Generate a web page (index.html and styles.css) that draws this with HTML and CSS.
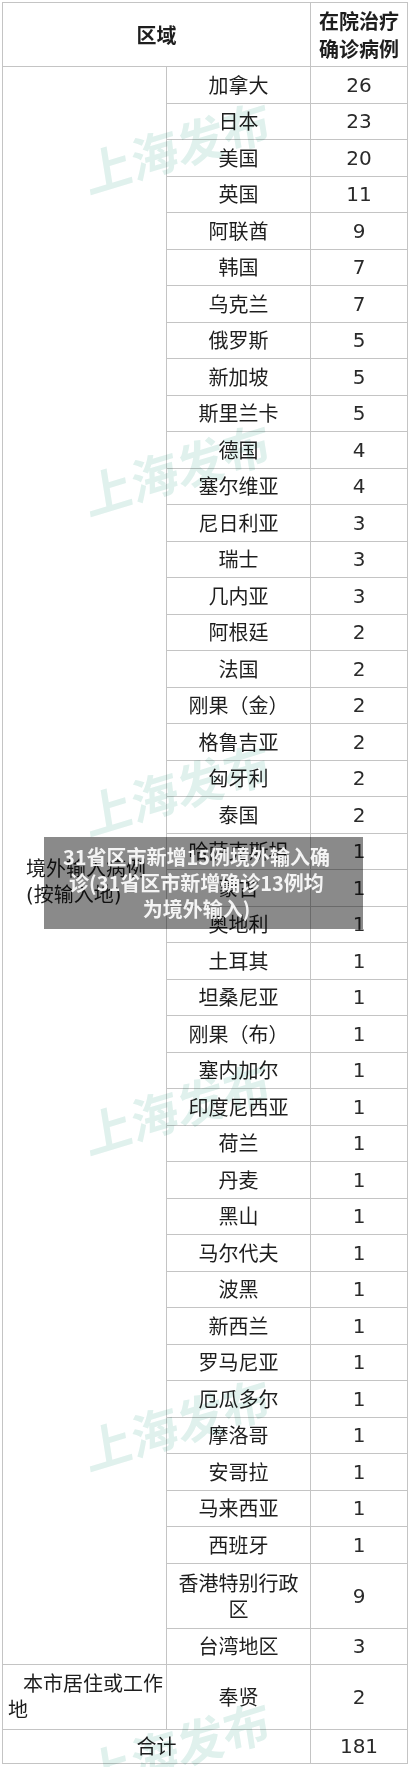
FILE: index.html
```html
<!DOCTYPE html>
<html lang="zh-CN">
<head>
<meta charset="utf-8">
<title>区域 在院治疗确诊病例</title>
<link rel="stylesheet" href="styles.css">
</head>
<body>
<div class="page">
  <table class="cases">
    <colgroup>
      <col class="c-region">
      <col class="c-place">
      <col class="c-num">
    </colgroup>
    <thead>
      <tr class="head">
        <th colspan="2" class="h-region">区域</th>
        <th class="h-num">在院治疗<br>确诊病例</th>
      </tr>
    </thead>
    <tbody>
      <tr><td rowspan="43" class="group group-abroad">境外输入病例<br>(按输入地)</td><td class="place">加拿大</td><td class="num">26</td></tr>
      <tr><td class="place">日本</td><td class="num">23</td></tr>
      <tr><td class="place">美国</td><td class="num">20</td></tr>
      <tr><td class="place">英国</td><td class="num">11</td></tr>
      <tr><td class="place">阿联酋</td><td class="num">9</td></tr>
      <tr><td class="place">韩国</td><td class="num">7</td></tr>
      <tr><td class="place">乌克兰</td><td class="num">7</td></tr>
      <tr><td class="place">俄罗斯</td><td class="num">5</td></tr>
      <tr><td class="place">新加坡</td><td class="num">5</td></tr>
      <tr><td class="place">斯里兰卡</td><td class="num">5</td></tr>
      <tr><td class="place">德国</td><td class="num">4</td></tr>
      <tr><td class="place">塞尔维亚</td><td class="num">4</td></tr>
      <tr><td class="place">尼日利亚</td><td class="num">3</td></tr>
      <tr><td class="place">瑞士</td><td class="num">3</td></tr>
      <tr><td class="place">几内亚</td><td class="num">3</td></tr>
      <tr><td class="place">阿根廷</td><td class="num">2</td></tr>
      <tr><td class="place">法国</td><td class="num">2</td></tr>
      <tr><td class="place">刚果（金）</td><td class="num">2</td></tr>
      <tr><td class="place">格鲁吉亚</td><td class="num">2</td></tr>
      <tr><td class="place">匈牙利</td><td class="num">2</td></tr>
      <tr><td class="place">泰国</td><td class="num">2</td></tr>
      <tr><td class="place">哈萨克斯坦</td><td class="num">1</td></tr>
      <tr><td class="place">蒙古</td><td class="num">1</td></tr>
      <tr><td class="place">奥地利</td><td class="num">1</td></tr>
      <tr><td class="place">土耳其</td><td class="num">1</td></tr>
      <tr><td class="place">坦桑尼亚</td><td class="num">1</td></tr>
      <tr><td class="place">刚果（布）</td><td class="num">1</td></tr>
      <tr><td class="place">塞内加尔</td><td class="num">1</td></tr>
      <tr><td class="place">印度尼西亚</td><td class="num">1</td></tr>
      <tr><td class="place">荷兰</td><td class="num">1</td></tr>
      <tr><td class="place">丹麦</td><td class="num">1</td></tr>
      <tr><td class="place">黑山</td><td class="num">1</td></tr>
      <tr><td class="place">马尔代夫</td><td class="num">1</td></tr>
      <tr><td class="place">波黑</td><td class="num">1</td></tr>
      <tr><td class="place">新西兰</td><td class="num">1</td></tr>
      <tr><td class="place">罗马尼亚</td><td class="num">1</td></tr>
      <tr><td class="place">厄瓜多尔</td><td class="num">1</td></tr>
      <tr><td class="place">摩洛哥</td><td class="num">1</td></tr>
      <tr><td class="place">安哥拉</td><td class="num">1</td></tr>
      <tr><td class="place">马来西亚</td><td class="num">1</td></tr>
      <tr><td class="place">西班牙</td><td class="num">1</td></tr>
      <tr class="tall"><td class="place">香港特别行政区</td><td class="num">9</td></tr>
      <tr class="short"><td class="place">台湾地区</td><td class="num">3</td></tr>
      <tr class="tall-local"><td class="group group-local">本市居住或工作地</td><td class="place">奉贤</td><td class="num">2</td></tr>
      <tr class="total"><td colspan="2" class="total-label">合计</td><td class="num">181</td></tr>
    </tbody>
  </table>

  <div class="watermark wm1">上海发布</div>
  <div class="watermark wm2">上海发布</div>
  <div class="watermark wm3">上海发布</div>
  <div class="watermark wm4">上海发布</div>
  <div class="watermark wm5">上海发布</div>
  <div class="watermark wm6">上海发布</div>

  <div class="caption">31省区市新增15例境外输入确<br>诊(31省区市新增确诊13例均<br>为境外输入)</div>
</div>
</body>
</html>
```

FILE: styles.css
```css
html, body {
  margin: 0;
  padding: 0;
  background: #ffffff;
}

.page {
  position: relative;
  width: 409px;
  height: 1767px;
  overflow: hidden;
  padding: 2px 0 0 2px;
  box-sizing: border-box;
  font-family: "DejaVu Sans", "Noto Sans CJK SC", sans-serif;
  color: #1e1e1e;
}

.cases {
  border-collapse: collapse;
  table-layout: fixed;
  width: 405px;
  font-size: 20px;
  line-height: 26px;
}

.c-region { width: 164px; }
.c-place { width: 144px; }
.c-num { width: 97px; }

.cases th,
.cases td {
  border: 1px solid #c4c4c4;
  padding: 0 3px;
  text-align: center;
  vertical-align: middle;
  font-weight: normal;
}

.cases tr { height: 36.5px; }

.cases .head { height: 64px; }

.cases th {
  font-family: "Noto Sans CJK SC", sans-serif;
  font-weight: 700;
  line-height: 28px;
}

.cases .place {
  font-family: "Noto Sans CJK SC", sans-serif;
  padding: 0 4px;
}

.cases .num {
  font-family: "DejaVu Sans", sans-serif;
  color: #2a2a2a;
}

.cases .tall { height: 65.5px; }
.cases .short { height: 35.5px; }
.cases .tall-local { height: 65px; }
.cases .total { height: 34px; }

.cases .group {
  text-align: left;
  font-family: "DejaVu Sans", "Noto Sans CJK SC", sans-serif;
}

.cases .group-abroad {
  padding: 34px 2px 0 23px;
}

.cases .group-local {
  padding: 0 2px 0 5px;
  text-indent: 15px;
}

.cases .total-label {
  font-family: "Noto Sans CJK SC", sans-serif;
}

.watermark {
  position: absolute;
  left: 177px;
  width: 240px;
  margin-left: -120px;
  height: 60px;
  margin-top: -30px;
  line-height: 60px;
  text-align: center;
  font-family: "Noto Sans CJK SC", sans-serif;
  font-weight: 700;
  font-size: 48px;
  color: #e0f1ed;
  transform: rotate(-17deg) skewX(-8deg);
  mix-blend-mode: multiply;
  pointer-events: none;
  white-space: nowrap;
}

.wm1 { top: 145px; }
.wm2 { top: 467px; }
.wm3 { top: 787px; }
.wm4 { top: 1106px; }
.wm5 { top: 1422px; }
.wm6 { top: 1745px; }

.caption {
  position: absolute;
  left: 44px;
  top: 837px;
  width: 319px;
  height: 92px;
  box-sizing: border-box;
  padding: 7px 14px 0 0;
  background: rgba(0, 0, 0, 0.46);
  color: #f4f4f4;
  font-family: "Noto Sans CJK SC", sans-serif;
  font-weight: 700;
  font-size: 20px;
  line-height: 26px;
  text-align: center;
  white-space: nowrap;
}
```
